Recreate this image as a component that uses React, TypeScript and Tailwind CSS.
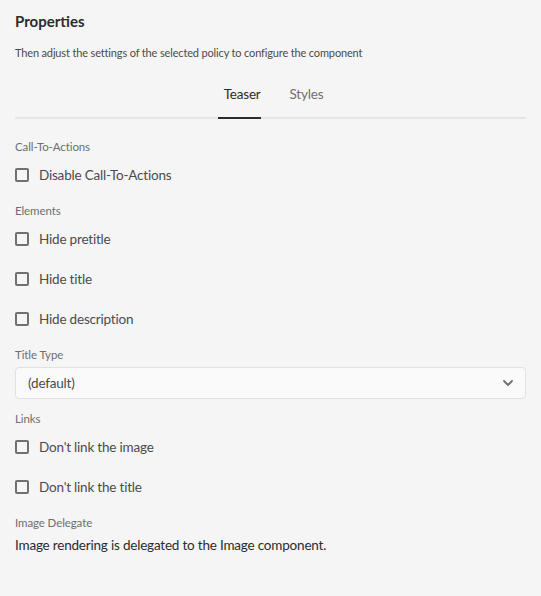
import React from "react";

const font = { fontFamily: '"Lato", "Liberation Sans", sans-serif' };

function Checkbox({ label }: { label: string }) {
  return (
    <div className="flex h-[40px] items-center">
      <div className="h-[14px] w-[14px] rounded-[2px] border-2 border-[#707070]" />
      <span className="ml-[10px] text-[13.5px] leading-[20px] tracking-[-0.2px] text-[#4b4b4b]">{label}</span>
    </div>
  );
}

function SectionLabel({ children, className = "" }: { children: React.ReactNode; className?: string }) {
  return (
    <div className={`text-[11.5px] leading-[16px] tracking-[-0.1px] text-[#6e6e6e] ${className}`}>{children}</div>
  );
}

export default function App() {
  return (
    <div className="min-h-[596px] w-full bg-[#f5f5f5] px-[15px]" style={font}>
      <div className="pt-[11px] text-[15px] font-bold leading-[20px] text-[#2c2c2c]">Properties</div>
      <div className="mt-[14px] text-[11px] leading-[16px] tracking-[-0.15px] text-[#4b4b4b]">
        Then adjust the settings of the selected policy to configure the component
      </div>
      <div className="mt-[23px] flex justify-center gap-[29px] border-b-2 border-[#e6e6e6]">
        <div className="-mb-[2px] border-b-2 border-[#2c2c2c] pb-[13px] pl-[6px] text-[13.5px] leading-[20px] tracking-[-0.2px] text-[#2c2c2c]">
          Teaser
        </div>
        <div className="pb-[13px] text-[13.5px] leading-[20px] tracking-[-0.2px] text-[#6e6e6e]">Styles</div>
      </div>
      <SectionLabel className="mt-[20px]">Call-To-Actions</SectionLabel>
      <Checkbox label="Disable Call-To-Actions" />
      <SectionLabel className="mt-[8px]">Elements</SectionLabel>
      <Checkbox label="Hide pretitle" />
      <Checkbox label="Hide title" />
      <Checkbox label="Hide description" />
      <SectionLabel className="mt-[8px]">Title Type</SectionLabel>
      <div className="mt-[4px] flex h-[32px] items-center justify-between rounded-[4px] border border-[#e1e1e1] bg-[#fafafa] px-[12px]">
        <span className="text-[13.5px] leading-[20px] tracking-[-0.2px] text-[#4b4b4b]">(default)</span>
        <svg width="10" height="6" viewBox="0 0 10 6" fill="none">
          <path d="M1 1l4 4 4-4" stroke="#6e6e6e" strokeWidth="1.8" strokeLinecap="round" strokeLinejoin="round" />
        </svg>
      </div>
      <SectionLabel className="mt-[12px]">Links</SectionLabel>
      <Checkbox label="Don't link the image" />
      <Checkbox label="Don't link the title" />
      <SectionLabel className="mt-[8px]">Image Delegate</SectionLabel>
      <div className="mt-[4px] text-[13.5px] leading-[20px] tracking-[-0.2px] text-[#2c2c2c]">
        Image rendering is delegated to the Image component.
      </div>
    </div>
  );
}
